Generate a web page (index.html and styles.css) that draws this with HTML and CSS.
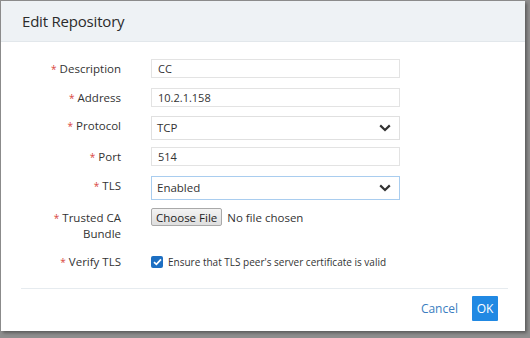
FILE: index.html
```html
<!DOCTYPE html>
<html>
<head>
<meta charset="utf-8">
<link rel="stylesheet" href="styles.css">
</head>
<body>
<div class="dialog">
  <div class="header"><h1 class="title">Edit Repository</h1></div>
  <div class="form">
    <div class="row">
      <label class="label"><span class="req">*</span> Description</label>
      <div class="input">CC</div>
    </div>
    <div class="row r-addr">
      <label class="label"><span class="req">*</span> Address</label>
      <div class="input">10.2.1.158</div>
    </div>
    <div class="row r-proto">
      <label class="label label-sel"><span class="req">*</span> Protocol</label>
      <div class="select"><span>TCP</span>
        <svg class="chev" width="12" height="8" viewBox="0 0 12 8"><path d="M1.2 1.4 L6 6 L10.8 1.4" fill="none" stroke="#333" stroke-width="2.2"/></svg>
      </div>
    </div>
    <div class="row r-port">
      <label class="label"><span class="req">*</span> Port</label>
      <div class="input">514</div>
    </div>
    <div class="row r-tls">
      <label class="label label-sel"><span class="req">*</span> TLS</label>
      <div class="select focus"><span>Enabled</span>
        <svg class="chev" width="12" height="8" viewBox="0 0 12 8"><path d="M1.2 1.4 L6 6 L10.8 1.4" fill="none" stroke="#333" stroke-width="2.2"/></svg>
      </div>
    </div>
    <div class="row r-file">
      <label class="label label-2"><span class="req">*</span> Trusted CA Bundle</label>
      <div class="file"><span class="file-btn">Choose File</span><span class="file-name">No file chosen</span></div>
    </div>
    <div class="row r-verify">
      <label class="label label-2"><span class="req">*</span> Verify TLS</label>
      <div class="check-wrap">
        <span class="check"><svg width="9" height="8" viewBox="0 0 9 8"><path d="M1 4.2 L3.4 6.4 L8 1.4" fill="none" stroke="#fff" stroke-width="1.7"/></svg></span>
        <span class="check-text">Ensure that TLS peer's server certificate is valid</span>
      </div>
    </div>
  </div>
  <div class="footer">
    <span class="cancel">Cancel</span>
    <span class="ok">OK</span>
  </div>
</div>
</body>
</html>
```

FILE: styles.css
```css
html, body {
  margin: 0;
  padding: 0;
}
body {
  width: 530px;
  height: 338px;
  background: #8e8e8e;
  font-family: "Open Sans", "Noto Sans", sans-serif;
  color: #333;
  overflow: hidden;
}
.dialog {
  margin: 1px 0 0 1px;
  width: 524px;
  height: 330px;
  background: #fff;
  box-shadow: 2px 2px 3px rgba(0,0,0,0.35);
  display: flex;
  flex-direction: column;
}
.header {
  height: 40px;
  background: #eef2f5;
  border-bottom: 1px solid #e2e7eb;
  display: flex;
  align-items: center;
  padding-left: 21px;
}
.title {
  margin: 0;
  font-size: 15px;
  font-weight: 500;
  color: #2b2b2b;
  letter-spacing: -0.2px;
}
.form {
  padding-top: 17px;
  display: flex;
  flex-direction: column;
}
.row {
  display: grid;
  grid-template-columns: 120px 249px;
  column-gap: 30px;
  align-items: start;
}
.r-addr { margin-top: 10px; }
.r-proto { margin-top: 9px; }
.r-port { margin-top: 7px; }
.r-tls { margin-top: 10px; }
.r-file { margin-top: 8px; }
.r-verify { margin-top: 12px; }
.label {
  box-sizing: border-box;
  text-align: right;
  font-size: 11.5px;
  line-height: 19px;
  height: 19px;
  padding-left: 50px;
  color: #333;
}
.label-sel { line-height: 20px; }
.label-2 {
  line-height: 16px;
  height: auto;
  padding-top: 2px;
}
.r-verify .label-2 { padding-top: 0; }
.req {
  color: #d9463e;
  font-size: 10px;
  line-height: 1;
}
.input {
  box-sizing: border-box;
  height: 19px;
  border: 1px solid #e3e3e3;
  padding-left: 6px;
  font-size: 11px;
  line-height: 17px;
  color: #333;
}
.select {
  box-sizing: border-box;
  height: 24px;
  border: 1px solid #e0e0e0;
  padding: 0 8px 0 5px;
  font-size: 11.5px;
  line-height: 1;
  color: #333;
  display: flex;
  align-items: center;
  justify-content: space-between;
}
.select.focus {
  border-color: #a9cdef;
}
.file {
  display: flex;
  align-items: center;
  height: 18px;
  font-size: 11.5px;
}
.file-btn {
  box-sizing: border-box;
  height: 18px;
  padding: 0 4px;
  display: flex;
  align-items: center;
  justify-content: center;
  border: 1px solid #a9a9a9;
  border-radius: 2px;
  background: linear-gradient(#f3f3f3, #dedede);
  color: #222;
}
.file-name {
  margin-left: 5px;
  color: #333;
}
.check-wrap {
  display: flex;
  align-items: center;
  height: 16px;
}
.check {
  width: 12px;
  height: 12px;
  box-sizing: border-box;
  background: #1d6fc2;
  border-radius: 2px;
  display: flex;
  align-items: center;
  justify-content: center;
}
.check-text {
  margin-left: 5px;
  font-size: 10px;
  color: #333;
}
.footer {
  margin: 18px 17px 0 20px;
  border-top: 1px solid #e6ebef;
  padding: 7px 10px 0 0;
  display: flex;
  justify-content: flex-end;
  align-items: center;
}
.cancel {
  color: #3a7dc0;
  font-size: 12px;
  margin-right: 14px;
}
.ok {
  width: 26px;
  height: 25px;
  background: #2189e3;
  color: #fff;
  font-size: 12px;
  display: flex;
  align-items: center;
  justify-content: center;
  border-radius: 1px;
}
```
